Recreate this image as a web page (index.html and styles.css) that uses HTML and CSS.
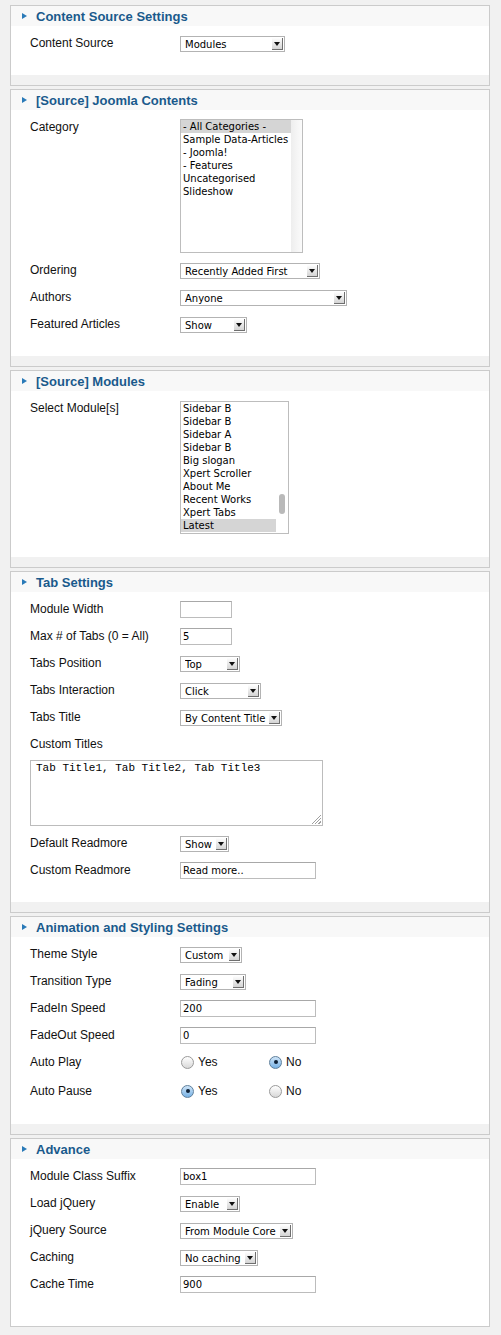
FILE: index.html
```html
<!DOCTYPE html>
<html>
<head>
<meta charset="utf-8">
<link rel="stylesheet" href="styles.css">
</head>
<body>
<div class="page">

<section class="panel">
  <h3 class="ptitle"><span class="tri"></span>Content Source Settings</h3>
  <div class="pbody">
    <div class="row"><span class="lbl">Content Source</span><div class="sel" style="width:105px"><span class="txt">Modules</span><i class="btn"></i></div></div>
  </div>
  <div class="pfoot"></div>
</section>

<section class="panel">
  <h3 class="ptitle"><span class="tri"></span>[Source] Joomla Contents</h3>
  <div class="pbody">
    <div class="row lrow1"><span class="lbl">Category</span>
      <div class="list list1">
        <div class="items">
          <div class="item on">- All Categories -</div>
          <div class="item">Sample Data-Articles</div>
          <div class="item">- Joomla!</div>
          <div class="item">- Features</div>
          <div class="item">Uncategorised</div>
          <div class="item">Slideshow</div>
        </div>
        <div class="track"></div>
      </div>
    </div>
    <div class="row"><span class="lbl">Ordering</span><div class="sel" style="width:140px"><span class="txt">Recently Added First</span><i class="btn"></i></div></div>
    <div class="row"><span class="lbl">Authors</span><div class="sel" style="width:167px"><span class="txt">Anyone</span><i class="btn"></i></div></div>
    <div class="row"><span class="lbl">Featured Articles</span><div class="sel" style="width:67px"><span class="txt">Show</span><i class="btn"></i></div></div>
  </div>
  <div class="pfoot"></div>
</section>

<section class="panel">
  <h3 class="ptitle"><span class="tri"></span>[Source] Modules</h3>
  <div class="pbody">
    <div class="row"><span class="lbl">Select Module[s]</span>
      <div class="list list2">
        <div class="items">
          <div class="item">Sidebar B</div>
          <div class="item">Sidebar B</div>
          <div class="item">Sidebar A</div>
          <div class="item">Sidebar B</div>
          <div class="item">Big slogan</div>
          <div class="item">Xpert Scroller</div>
          <div class="item">About Me</div>
          <div class="item">Recent Works</div>
          <div class="item">Xpert Tabs</div>
          <div class="item on">Latest</div>
        </div>
        <div class="track2"><span class="thumb"></span></div>
      </div>
    </div>
  </div>
  <div class="pfoot"></div>
</section>

<section class="panel">
  <h3 class="ptitle"><span class="tri"></span>Tab Settings</h3>
  <div class="pbody">
    <div class="row"><span class="lbl">Module Width</span><div class="inp" style="width:52px"></div></div>
    <div class="row"><span class="lbl">Max # of Tabs (0 = All)</span><div class="inp" style="width:52px">5</div></div>
    <div class="row"><span class="lbl">Tabs Position</span><div class="sel" style="width:60px"><span class="txt">Top</span><i class="btn"></i></div></div>
    <div class="row"><span class="lbl">Tabs Interaction</span><div class="sel" style="width:81px"><span class="txt">Click</span><i class="btn"></i></div></div>
    <div class="row"><span class="lbl">Tabs Title</span><div class="sel" style="width:102px"><span class="txt">By Content Title</span><i class="btn"></i></div></div>
    <div class="row short"><span class="lbl">Custom Titles</span></div>
    <div class="tarea">Tab Title1, Tab Title2, Tab Title3<span class="grip"></span></div>
    <div class="row"><span class="lbl">Default Readmore</span><div class="sel" style="width:49px"><span class="txt">Show</span><i class="btn"></i></div></div>
    <div class="row"><span class="lbl">Custom Readmore</span><div class="inp" style="width:136px">Read more..</div></div>
  </div>
  <div class="pfoot"></div>
</section>

<section class="panel">
  <h3 class="ptitle"><span class="tri"></span>Animation and Styling Settings</h3>
  <div class="pbody">
    <div class="row"><span class="lbl">Theme Style</span><div class="sel" style="width:62px"><span class="txt">Custom</span><i class="btn"></i></div></div>
    <div class="row"><span class="lbl">Transition Type</span><div class="sel" style="width:66px"><span class="txt">Fading</span><i class="btn"></i></div></div>
    <div class="row"><span class="lbl">FadeIn Speed</span><div class="inp" style="width:136px">200</div></div>
    <div class="row"><span class="lbl">FadeOut Speed</span><div class="inp" style="width:136px">0</div></div>
    <div class="row radios"><span class="lbl">Auto Play</span>
      <span class="opt"><span class="radio"></span>Yes</span>
      <span class="opt"><span class="radio on"></span>No</span>
    </div>
    <div class="row radios last-radio"><span class="lbl">Auto Pause</span>
      <span class="opt"><span class="radio on"></span>Yes</span>
      <span class="opt"><span class="radio"></span>No</span>
    </div>
  </div>
  <div class="pfoot"></div>
</section>

<section class="panel">
  <h3 class="ptitle"><span class="tri"></span>Advance</h3>
  <div class="pbody">
    <div class="row"><span class="lbl">Module Class Suffix</span><div class="inp" style="width:136px">box1</div></div>
    <div class="row"><span class="lbl">Load jQuery</span><div class="sel" style="width:60px"><span class="txt">Enable</span><i class="btn"></i></div></div>
    <div class="row"><span class="lbl">jQuery Source</span><div class="sel" style="width:113px"><span class="txt">From Module Core</span><i class="btn"></i></div></div>
    <div class="row"><span class="lbl">Caching</span><div class="sel" style="width:78px"><span class="txt">No caching</span><i class="btn"></i></div></div>
    <div class="row"><span class="lbl">Cache Time</span><div class="inp" style="width:136px">900</div></div>
  </div>
  <div class="pfoot white"></div>
</section>

</div>
</body>
</html>
```

FILE: styles.css
```css
html, body {
  margin: 0;
  padding: 0;
  background: #f1f1f1;
}
body {
  width: 501px;
  height: 1335px;
  overflow: hidden;
}
.page {
  padding: 5px 11px 0 10px;
  display: flex;
  flex-direction: column;
  gap: 3px;
}
.panel {
  border: 1px solid #cbcbcb;
  background: #fff;
}
.ptitle {
  margin: 0;
  height: 20px;
  display: flex;
  align-items: center;
  padding-left: 11px;
  background: #f8f8f8;
  font: bold 13px "Liberation Sans", Arial, sans-serif;
  color: #1a5a8c;
}
.tri {
  width: 0;
  height: 0;
  border-top: 3.5px solid transparent;
  border-bottom: 3.5px solid transparent;
  border-left: 5px solid #2a7ab8;
  margin-right: 9px;
  margin-top: -1px;
}
.pbody {
  padding: 10px 0 23px 19px;
}
.pfoot {
  height: 10px;
  background: #f1f1f1;
}
.pfoot.white {
  background: #fff;
}
.row {
  display: flex;
  align-items: flex-start;
  min-height: 16px;
  margin-bottom: 11px;
}
.row:last-child {
  margin-bottom: 0;
}
.row.lrow1 {
  margin-top: -1px;
  margin-bottom: 10px;
}
.row.short {
  margin-bottom: 7px;
}
.lbl {
  width: 150px;
  flex: none;
  font: 12px/14px "Liberation Sans", Arial, sans-serif;
  color: #111;
}
.lrow1 .lbl {
  margin-top: 1px;
}
.sel {
  box-sizing: border-box;
  height: 16px;
  display: flex;
  align-items: center;
  border: 1px solid #b3b3b3;
  background: #fff;
  padding-left: 4px;
  font: 10px "DejaVu Sans", sans-serif;
  color: #000;
}
.sel .txt {
  flex: 1;
  white-space: nowrap;
  overflow: hidden;
}
.sel .btn {
  box-sizing: border-box;
  width: 11px;
  height: 12px;
  margin-right: 1px;
  background: linear-gradient(#fefefe, #d4d4d4);
  border-right: 1px solid #6f6f6f;
  border-bottom: 1px solid #6f6f6f;
  display: flex;
  align-items: center;
  justify-content: center;
}
.sel .btn::after {
  content: "";
  border-left: 3px solid transparent;
  border-right: 3px solid transparent;
  border-top: 4px solid #111;
}
.inp {
  box-sizing: border-box;
  height: 17px;
  margin-top: -1px;
  border: 1px solid #bcbcbc;
  border-top-color: #a8a8a8;
  background: #fff;
  padding-left: 2px;
  font: 10px/15px "DejaVu Sans", sans-serif;
  color: #000;
}
.list {
  box-sizing: border-box;
  border: 1px solid #bdbdbd;
  background: #fff;
  display: flex;
  font: 10px/13px "DejaVu Sans", sans-serif;
  color: #000;
}
.list1 {
  width: 123px;
  height: 134px;
}
.list2 {
  width: 109px;
  height: 133px;
}
.items {
  flex: 1;
}
.item {
  height: 13px;
  padding-left: 2px;
  white-space: nowrap;
}
.item.on {
  background: #d5d5d5;
}
.track {
  width: 11px;
  background: linear-gradient(90deg, #eeeeee, #fbfbfb);
}
.track2 {
  width: 12px;
  position: relative;
}
.thumb {
  position: absolute;
  left: 3px;
  top: 92px;
  width: 6px;
  height: 20px;
  border-radius: 3px;
  background: #b9b9b9;
}
.tarea {
  box-sizing: border-box;
  position: relative;
  width: 293px;
  height: 66px;
  border: 1px solid #bcbcbc;
  padding: 1px 0 0 5px;
  font: 11px/13px "Liberation Mono", "Courier New", monospace;
  color: #000;
  margin-bottom: 10px;
}
.grip {
  position: absolute;
  right: 1px;
  bottom: 1px;
  width: 9px;
  height: 9px;
  background: linear-gradient(135deg, transparent 0 45%, #a0a0a0 45% 52%, transparent 52% 64%, #a0a0a0 64% 71%, transparent 71% 83%, #a0a0a0 83% 90%, transparent 90%);
}
.radios {
  min-height: 14px;
  align-items: center;
  margin-bottom: 15px;
}
.radios .lbl {
  margin-top: -1px;
}
.radios.last-radio {
  margin-bottom: 3px;
}
.opt {
  width: 88px;
  display: flex;
  align-items: center;
  font: 12px/14px "Liberation Sans", Arial, sans-serif;
  color: #111;
}
.radio {
  box-sizing: border-box;
  width: 13px;
  height: 13px;
  border-radius: 50%;
  border: 1px solid #9a9a9a;
  background: linear-gradient(#ffffff, #d8d8d8);
  margin-left: 1px;
  margin-right: 4px;
  display: flex;
  align-items: center;
  justify-content: center;
}
.radio.on {
  border-color: #5e7f9c;
  background: linear-gradient(#cfe5f8, #77b1e4);
}
.radio.on::after {
  content: "";
  width: 4px;
  height: 4px;
  border-radius: 50%;
  background: #0e2036;
}
```
